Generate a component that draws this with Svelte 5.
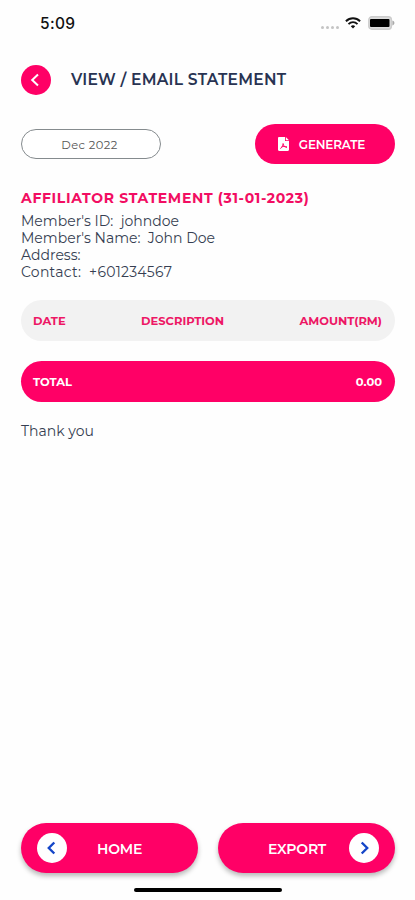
<script lang="ts">
    let month = "Dec 2022";
    let statementDate = "31-01-2023";

    let member = [
        { label: "Member's ID:", value: "johndoe", cls: "id" },
        { label: "Member's Name:", value: "John Doe", cls: "name" },
        { label: "Address:", value: "", cls: "address" },
        { label: "Contact:", value: "+601234567", cls: "contact" },
    ];

    let total = 0;
</script>

<div class="screen">
    <div class="status">
        <span class="time">5:09</span>
        <div class="status-icons">
            <div class="dots"><i></i><i></i><i></i><i></i></div>
            <svg class="wifi" width="16" height="12" viewBox="0 0 16 12" fill="none" stroke="#111" stroke-width="1.9">
                <path d="M.9 4.2C5 .2 11 .2 15.1 4.2" />
                <path d="M3.5 7.1C6.1 4.5 9.9 4.5 12.5 7.1" />
                <path d="M5.8 9.2C7.1 7.9 8.9 7.9 10.2 9.2L8 11.6Z" fill="#111" stroke="none" />
            </svg>
            <svg class="battery" width="27" height="14" viewBox="0 0 27 14">
                <rect x=".8" y=".8" width="22.6" height="12.4" rx="3" fill="#ddd" stroke="#ccc" stroke-width="1.4" />
                <rect x="2" y="3" width="19.5" height="8" rx="1" fill="#000" />
                <path d="M24.4 4.6v4.8c1.6-.6 2-1.5 2-2.4s-.4-1.8-2-2.4z" fill="#aaa" />
            </svg>
        </div>
    </div>

    <header>
        <button class="back" aria-label="Back">
            <svg width="30" height="30" viewBox="0 0 30 30" fill="none" stroke="#fff" stroke-width="2">
                <path d="M17 9.5L11.2 15L17 20.5" />
            </svg>
        </button>
        <h1>VIEW / EMAIL STATEMENT</h1>
    </header>

    <div class="filter">
        <button class="month"><span>{month}</span></button>
        <button class="generate">
            <svg width="11" height="14" viewBox="0 0 11 14">
                <path d="M1.2 0H7v4h4v8.8c0 .7-.5 1.2-1.2 1.2H1.2C.5 14 0 13.5 0 12.8V1.2C0 .5.5 0 1.2 0z" fill="#fff" />
                <path d="M7.8 0L11 3.2H7.8z" fill="#fff" />
                <path d="M2.3 11.5C4 10.7 5.3 8.5 5.1 6.2M5.1 7C5.5 9 7 10.2 9 9.8M3.2 10.2C4.8 9.3 6.8 9 8.8 10.6" fill="none" stroke="#ff0066" stroke-width="1" />
            </svg>
            <span>GENERATE</span>
        </button>
    </div>

    <main>
        <h2><span>AFFILIATOR STATEMENT ({statementDate})</span></h2>
        {#each member as row}
            <p class="info {row.cls}">{row.label}&nbsp; {row.value}</p>
        {/each}

        <div class="bar head">
            <span class="date">DATE</span>
            <span class="desc">DESCRIPTION</span>
            <span class="amount">AMOUNT(RM)</span>
        </div>
        <div class="bar total">
            <span class="label">TOTAL</span>
            <span class="sum">{total.toFixed(2)}</span>
        </div>
        <p class="thanks">Thank you</p>
    </main>

    <footer>
        <button class="nav home">
            <span class="circle">
                <svg width="30" height="30" viewBox="0 0 30 30" fill="none" stroke="#1546c8" stroke-width="2.4">
                    <path d="M17.3 9.5L11.8 15L17.3 20.5" />
                </svg>
            </span>
            <span class="text">HOME</span>
        </button>
        <button class="nav export">
            <span class="text">EXPORT</span>
            <span class="circle">
                <svg width="30" height="30" viewBox="0 0 30 30" fill="none" stroke="#1546c8" stroke-width="2.4">
                    <path d="M12.7 9.5L18.2 15L12.7 20.5" />
                </svg>
            </span>
        </button>
    </footer>
    <div class="indicator"></div>
</div>

<style>
:global(body) {
    background: #fff;
}

.screen {
    display: flex;
    flex-direction: column;
    box-sizing: border-box;
    width: 415px;
    height: 900px;
    padding: 0 20px 8px 21px;
    background: #fefefe;
    color: #363e52;
    font-family: Montserrat, Inter, sans-serif;
    overflow: hidden;
}

button {
    border: none;
    padding: 0;
    font: inherit;
    color: inherit;
}

svg {
    display: block;
}

span, h1 {
    white-space: nowrap;
}

.status {
    display: flex;
    justify-content: space-between;
    align-items: center;
    height: 46px;
    padding-left: 19px;
}

.time {
    color: #111;
    font-family: Inter, sans-serif;
    font-size: 15.5px;
    font-weight: 500;
    letter-spacing: 0.3px;
}

.status-icons {
    display: flex;
    align-items: center;
}

.dots {
    display: flex;
    gap: 2px;
    margin: 8px 6px 0 0;
}

.dots i {
    width: 3px;
    height: 3px;
    border-radius: 50%;
    background: #c4c4c4;
}

.wifi {
    margin-right: 7px;
}

header {
    display: flex;
    align-items: center;
    height: 30px;
    margin-top: 19px;
}

.back {
    width: 30px;
    height: 30px;
    border-radius: 50%;
    background: #ff0066;
}

h1 {
    margin: 0 0 1px 20px;
    color: #283352;
    font-size: 15.5px;
    font-weight: 600;
    letter-spacing: 0.25px;
}

.filter {
    display: flex;
    justify-content: space-between;
    align-items: center;
    height: 40px;
    margin-top: 29px;
}

.month {
    box-sizing: border-box;
    width: 140px;
    height: 30px;
    padding: 1px 3px 0 0;
    border: 1px solid #858b8e;
    border-radius: 15px;
    background: #fff;
    color: #555;
    font-size: 11.5px;
    letter-spacing: 0.4px;
}

.generate {
    display: flex;
    align-items: center;
    justify-content: center;
    gap: 10px;
    width: 140px;
    height: 40px;
    padding-right: 7px;
    box-sizing: border-box;
    border-radius: 20px;
    background: #ff0066;
    color: #fff;
    font-size: 12px;
    font-weight: 600;
    letter-spacing: -0.15px;
}

h2 {
    margin: 25px 0 6px;
    color: #f20d62;
    font-size: 14px;
    line-height: 18px;
    font-weight: 700;
    letter-spacing: 0.66px;
}

.info, .thanks {
    margin: 0;
    font-size: 14px;
    line-height: 17px;
    white-space: nowrap;
}

.contact {
    letter-spacing: 0.25px;
}

.bar {
    display: flex;
    justify-content: space-between;
    align-items: center;
    box-sizing: border-box;
    height: 41px;
    padding: 0 13px 0 12px;
    border-radius: 21px;
    font-size: 11.5px;
    font-weight: 700;
}

.head {
    margin-top: 19px;
    background: #f2f2f2;
    color: #ed1765;
}

.total {
    margin-top: 20px;
    background: #ff0066;
    color: #fff;
}

.thanks {
    margin-top: 21px;
}

footer {
    display: flex;
    gap: 20px;
    margin-top: auto;
}

.nav {
    display: flex;
    align-items: center;
    flex: 1;
    height: 50px;
    border-radius: 25px;
    background: #ff0066;
    box-shadow: 0 3px 5px rgba(0, 0, 0, 0.28);
    color: #fff;
    font-size: 14px;
    font-weight: 600;
}

.nav .text {
    padding-top: 2px;
    letter-spacing: -0.2px;
}

.circle {
    width: 30px;
    height: 30px;
    border-radius: 50%;
    background: #fff;
}

.home {
    gap: 30px;
    padding-left: 16px;
}

.export {
    justify-content: flex-end;
    gap: 23px;
    padding-right: 16px;
}

.indicator {
    width: 148px;
    height: 4px;
    margin: 15px 0 0 113px;
    border-radius: 2px;
    background: #000;
}
</style>
